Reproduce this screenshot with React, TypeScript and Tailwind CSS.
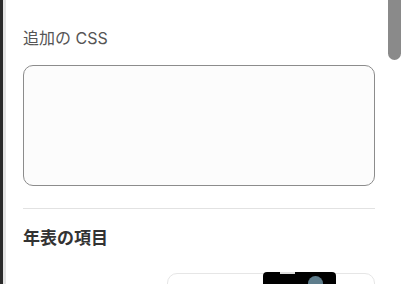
export default function App() {
  return (
    <div className="relative flex h-[284px] w-[402px] overflow-hidden bg-white font-['Inter','Noto_Sans_CJK_JP',sans-serif]">
      {/* left frame edge */}
      <div className="w-[3px] shrink-0 bg-[#2b2b2b]" />
      <div className="w-[3px] shrink-0 bg-[#e3e3e3]" />

      <div className="flex-1 pl-[17px] pr-[27px] pt-[26px]">
        <label htmlFor="extraCss" className="block text-[16px] leading-[24px] text-[#555555]">
          追加の CSS
        </label>
        <textarea
          id="extraCss"
          className="mt-[15px] block h-[121px] w-full resize-none rounded-[10px] border border-[#8c8c8c] bg-[#fcfcfc]"
        />

        <div className="mt-[22px] h-px bg-[#e2e2e2]" />

        <h2 className="mt-[17px] text-[17px] font-bold leading-[24px] text-[#333333]">年表の項目</h2>

        {/* timeline item card */}
        <div className="mt-[23px] flex justify-end">
          <div className="relative h-[40px] w-[208px] rounded-[10px] border border-[#e6e6e6] bg-white">
            <div className="absolute left-[95px] top-[-2px] h-[40px] w-[73px] rounded-[4px] bg-black">
              <div className="absolute left-[17px] top-0 h-[2px] w-[15px] bg-[#dcdcdc]" />
              <div className="absolute left-[45px] top-[4px] h-[15px] w-[15px] rounded-full bg-[#5e7d8c]" />
            </div>
          </div>
        </div>
      </div>

      {/* scrollbar thumb */}
      <div className="absolute right-[1px] top-0 h-[60px] w-[13px] rounded-b-full bg-[#8a8a8a]" />
    </div>
  );
}
